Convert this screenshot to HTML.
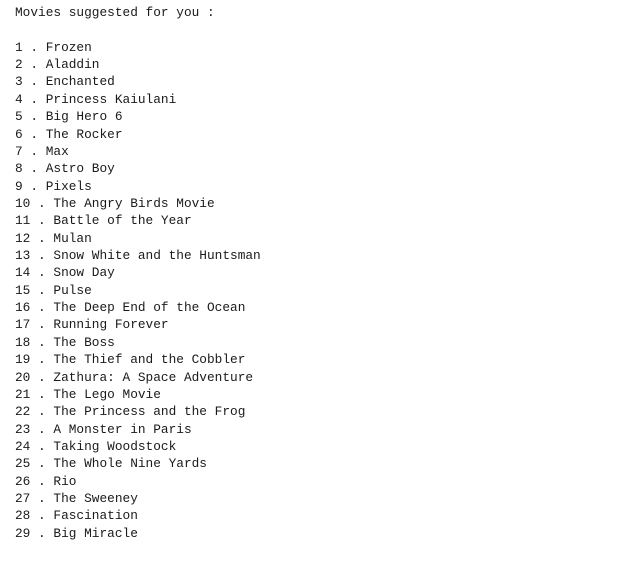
<!DOCTYPE html>
<html><head><meta charset="utf-8"><style>
html,body{margin:0;padding:0;background:#fff;width:620px;height:561px;overflow:hidden}
pre{margin:0;position:absolute;left:15px;top:4px;font-family:"Liberation Mono","DejaVu Sans Mono",monospace;font-size:12.8px;line-height:17.36px;color:#1a1a1a}
</style></head><body><pre>Movies suggested for you :

1 . Frozen
2 . Aladdin
3 . Enchanted
4 . Princess Kaiulani
5 . Big Hero 6
6 . The Rocker
7 . Max
8 . Astro Boy
9 . Pixels
10 . The Angry Birds Movie
11 . Battle of the Year
12 . Mulan
13 . Snow White and the Huntsman
14 . Snow Day
15 . Pulse
16 . The Deep End of the Ocean
17 . Running Forever
18 . The Boss
19 . The Thief and the Cobbler
20 . Zathura: A Space Adventure
21 . The Lego Movie
22 . The Princess and the Frog
23 . A Monster in Paris
24 . Taking Woodstock
25 . The Whole Nine Yards
26 . Rio
27 . The Sweeney
28 . Fascination
29 . Big Miracle</pre></body></html>
